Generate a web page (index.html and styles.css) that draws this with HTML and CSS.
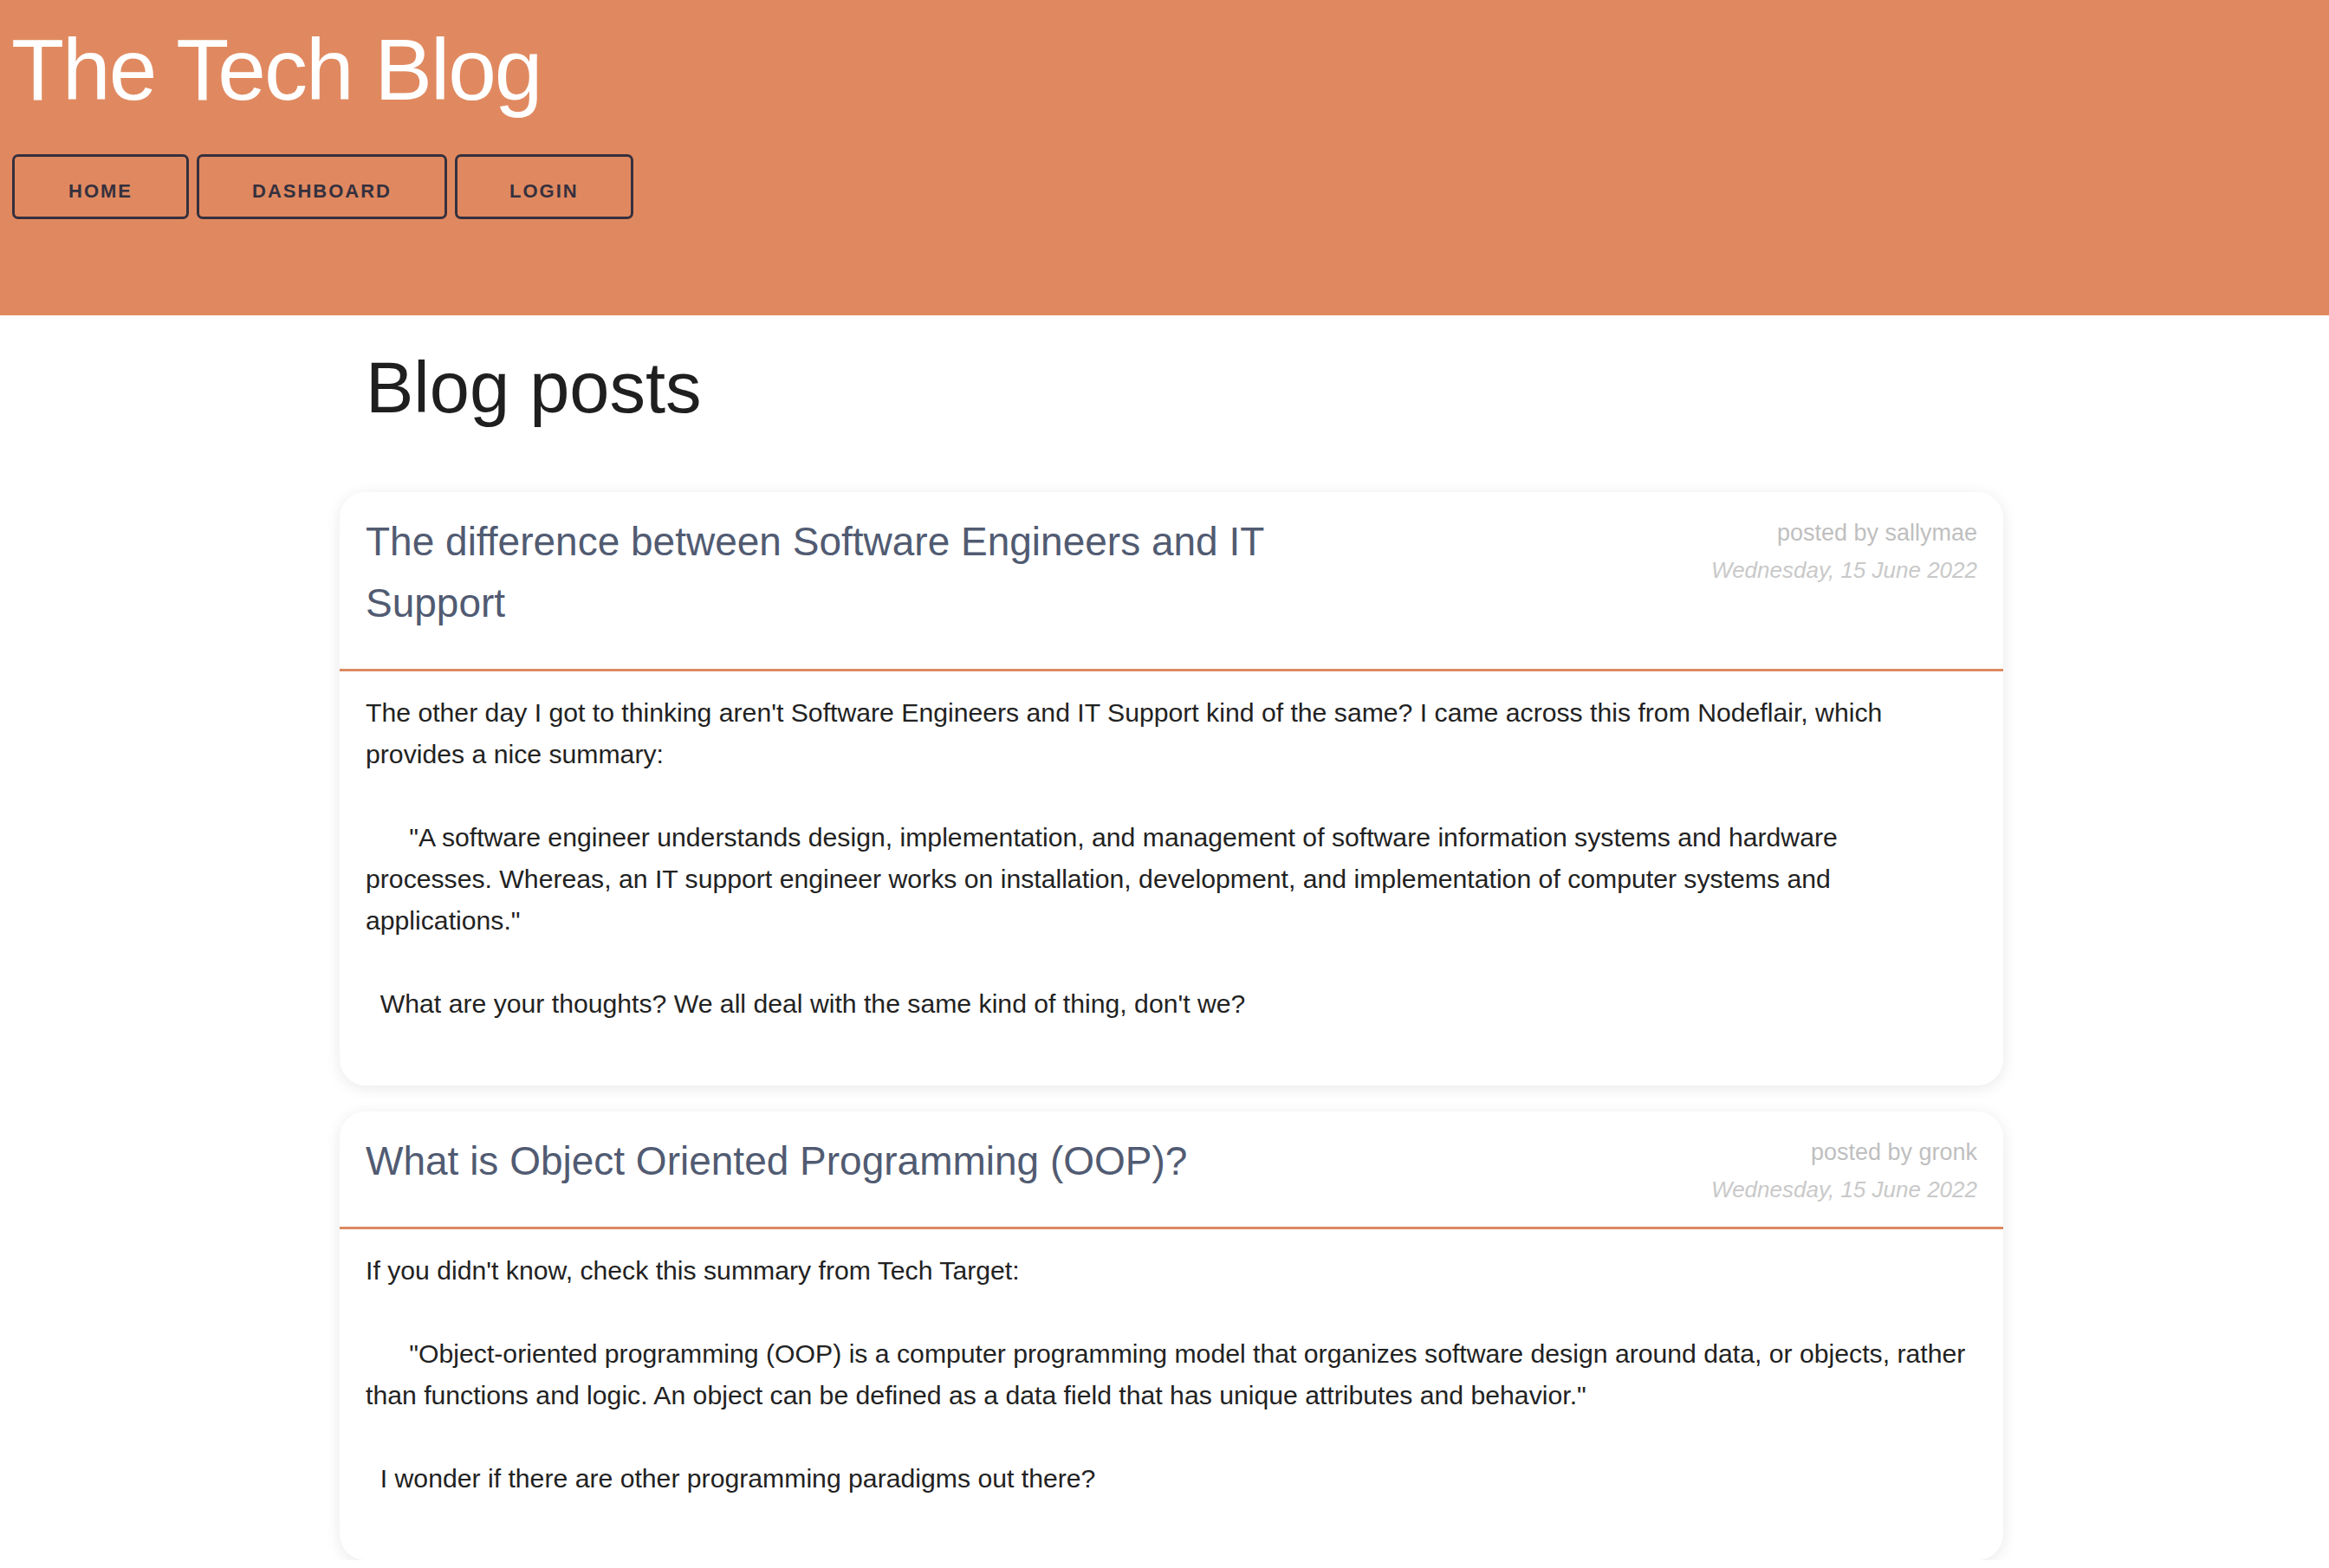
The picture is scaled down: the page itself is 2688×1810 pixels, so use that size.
FILE: index.html
```html
<!DOCTYPE html>
<html lang="en">
<head>
<meta charset="utf-8">
<title>The Tech Blog</title>
<link rel="stylesheet" href="styles.css">
</head>
<body>
<header class="site-header">
  <h1 class="site-title">The Tech Blog</h1>
  <nav class="site-nav">
    <a class="nav-btn nav-home" href="#">Home</a>
    <a class="nav-btn" href="#">Dashboard</a>
    <a class="nav-btn nav-login" href="#">Login</a>
  </nav>
</header>
<main class="main">
  <h2 class="page-title">Blog posts</h2>
  <div class="posts">
    <article class="post">
      <div class="post-head">
        <h3 class="post-title">The difference between Software Engineers and IT Support</h3>
        <div class="post-meta">
          <div class="post-author">posted by sallymae</div>
          <div class="post-date">Wednesday, 15 June 2022</div>
        </div>
      </div>
      <p class="post-body">The other day I got to thinking aren't Software Engineers and IT Support kind of the same? I came across this from Nodeflair, which
provides a nice summary:

      "A software engineer understands design, implementation, and management of software information systems and hardware
processes. Whereas, an IT support engineer works on installation, development, and implementation of computer systems and
applications."

  What are your thoughts? We all deal with the same kind of thing, don't we?</p>
    </article>
    <article class="post">
      <div class="post-head">
        <h3 class="post-title">What is Object Oriented Programming (OOP)?</h3>
        <div class="post-meta">
          <div class="post-author">posted by gronk</div>
          <div class="post-date">Wednesday, 15 June 2022</div>
        </div>
      </div>
      <p class="post-body">If you didn't know, check this summary from Tech Target:

      "Object-oriented programming (OOP) is a computer programming model that organizes software design around data, or objects, rather
than functions and logic. An object can be defined as a data field that has unique attributes and behavior."

  I wonder if there are other programming paradigms out there?</p>
    </article>
  </div>
</main>
</body>
</html>
```

FILE: styles.css
```css
* {
  box-sizing: border-box;
}

body {
  margin: 0;
  background: #ffffff;
  color: #222222;
  font-family: "Liberation Sans", Arial, Helvetica, sans-serif;
}

.site-header {
  background: #e08960;
  padding: 23px 13px 111px;
}

.site-title {
  margin: 0;
  font-size: 100px;
  line-height: 115px;
  font-weight: 400;
  letter-spacing: -2px;
  color: #ffffff;
}

.site-nav {
  display: flex;
  gap: 9px;
  margin-top: 40px;
  padding-left: 1px;
}

.nav-btn {
  display: block;
  border: 3px solid #35303e;
  border-radius: 7px;
  padding: 27px 61px 17px;
  font-size: 22px;
  line-height: 25px;
  font-weight: 700;
  letter-spacing: 2px;
  text-transform: uppercase;
  text-decoration: none;
  color: #35303e;
}

.nav-home {
  padding-left: 62px;
  padding-right: 62px;
}

.nav-login {
  padding-left: 60px;
  padding-right: 60px;
}

.main {
  width: 1920px;
  margin-left: calc(50% - 952px);
}

.page-title {
  margin: 37px 0 73px;
  padding-left: 30px;
  font-size: 83px;
  line-height: 94px;
  font-weight: 400;
  color: #1f1f1f;
}

.posts {
  display: flex;
  flex-direction: column;
  gap: 30px;
}

.post {
  background: #ffffff;
  border-radius: 30px;
  box-shadow: 0 3px 18px rgba(0, 0, 0, 0.09);
  overflow: hidden;
}

.post-head {
  display: flex;
  justify-content: space-between;
  align-items: flex-start;
  padding: 22px 30px 21px;
  border-bottom: 3px solid #dc8a62;
}

.post-title {
  margin: 0 0 19px;
  max-width: 60%;
  font-size: 46px;
  line-height: 71px;
  font-weight: 400;
  color: #515b72;
}

.post-meta {
  padding-top: 3px;
  text-align: right;
  color: #bfbfbf;
}

.post-author {
  font-size: 27px;
  line-height: 44px;
}

.post-date {
  font-size: 26px;
  line-height: 42px;
  font-style: italic;
  font-weight: 300;
  color: #c9c9c9;
}

.post-body {
  margin: 0;
  padding: 24px 24px 70px 30px;
  white-space: pre-wrap;
  font-size: 30.2px;
  line-height: 48px;
  color: #222222;
}
```
